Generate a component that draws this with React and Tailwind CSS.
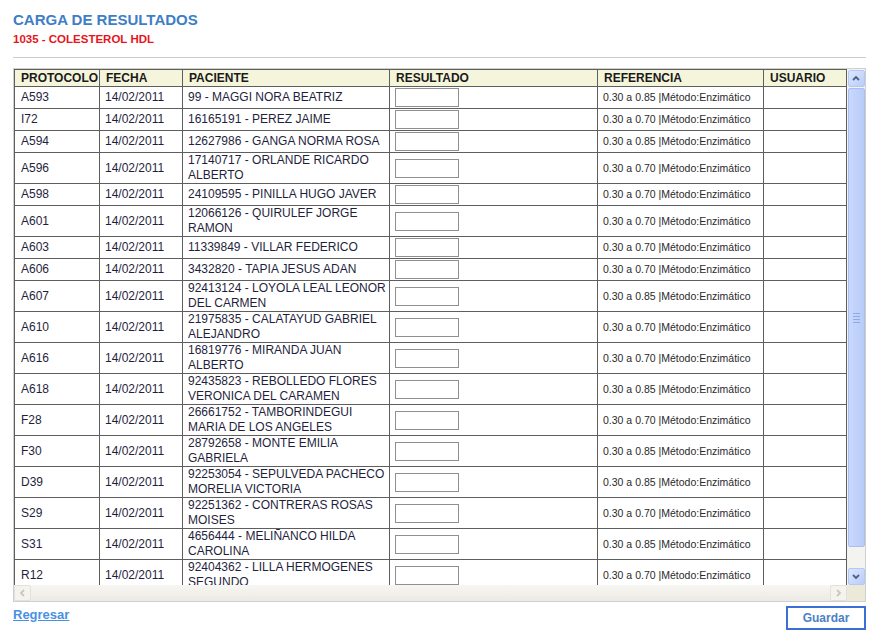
import React from 'react';

const rows = [
    ['A593', '99 - MAGGI NORA BEATRIZ', '0.85'],
    ['I72', '16165191 - PEREZ JAIME', '0.70'],
    ['A594', '12627986 - GANGA NORMA ROSA', '0.85'],
    ['A596', '17140717 - ORLANDE RICARDO ALBERTO', '0.70'],
    ['A598', '24109595 - PINILLA HUGO JAVER', '0.70'],
    ['A601', '12066126 - QUIRULEF JORGE RAMON', '0.70'],
    ['A603', '11339849 - VILLAR FEDERICO', '0.70'],
    ['A606', '3432820 - TAPIA JESUS ADAN', '0.70'],
    ['A607', '92413124 - LOYOLA LEAL LEONOR DEL CARMEN', '0.85'],
    ['A610', '21975835 - CALATAYUD GABRIEL ALEJANDRO', '0.70'],
    ['A616', '16819776 - MIRANDA JUAN ALBERTO', '0.70'],
    ['A618', '92435823 - REBOLLEDO FLORES VERONICA DEL CARAMEN', '0.85'],
    ['F28', '26661752 - TAMBORINDEGUI MARIA DE LOS ANGELES', '0.70'],
    ['F30', '28792658 - MONTE EMILIA GABRIELA', '0.85'],
    ['D39', '92253054 - SEPULVEDA PACHECO MORELIA VICTORIA', '0.85'],
    ['S29', '92251362 - CONTRERAS ROSAS MOISES', '0.70'],
    ['S31', '4656444 - MELIÑANCO HILDA CAROLINA', '0.85'],
    ['R12', '92404362 - LILLA HERMOGENES SEGUNDO', '0.70'],
];

const headers = ['PROTOCOLO', 'FECHA', 'PACIENTE', 'RESULTADO', 'REFERENCIA', 'USUARIO'];

function Chevron({ dir, color }) {
    const pts = {
        up: '2,6 5,3 8,6',
        down: '2,3 5,6 8,3',
        left: '6,2 3,5 6,8',
        right: '3,2 6,5 3,8',
    }[dir];
    return (
        <svg width="10" height="10" viewBox="0 0 10 10">
            <polyline points={pts} fill="none" stroke={color} strokeWidth="1.8" />
        </svg>
    );
}

function VButton({ dir }) {
    return (
        <div className="h-[17px] w-[17px] rounded-[2px] border border-[#b4c8f5] bg-gradient-to-br from-[#dce6fe] to-[#b9cdfa] flex items-center justify-center">
            <Chevron dir={dir} color="#4d6185" />
        </div>
    );
}

function HButton({ dir }) {
    return (
        <div className="h-[16px] w-[17px] rounded-[2px] border border-[#e2e1da] bg-[#f4f3ee] flex items-center justify-center">
            <Chevron dir={dir} color="#c9c8c0" />
        </div>
    );
}

export default function App() {
    return (
        <div className="min-h-screen bg-white font-['Liberation_Sans',Arial,sans-serif] pl-[13px] pt-[10px]">
            <h1 className="text-[15px] leading-[19px] font-bold text-[#3d7ec6]">CARGA DE RESULTADOS</h1>
            <h2 className="text-[11.5px] leading-[15px] font-bold text-[#e8141c] mt-[3px]">1035 - COLESTEROL HDL</h2>
            <div className="w-[853px] h-px bg-[#cccccc] mt-[10px]" />

            <div className="w-[853px] mt-[10px] border border-[#cfcfcf] flex flex-col">
                <div className="flex">
                    <div className="flex-1 h-[516px] overflow-hidden">
                        <table className="table-fixed border-collapse w-[832px] text-[12px] leading-[15px] text-[#1f1f3d]">
                            <colgroup>
                                <col className="w-[85px]" />
                                <col className="w-[83px]" />
                                <col className="w-[207px]" />
                                <col className="w-[208px]" />
                                <col className="w-[166px]" />
                                <col className="w-[83px]" />
                            </colgroup>
                            <thead>
                                <tr className="bg-[#f5f5dc]">
                                    {headers.map((h) => (
                                        <th key={h} className="border border-[#5e5e5e] text-left font-bold text-[#1a1a1a] pl-[6px] leading-[15px] h-[17px]">
                                            {h}
                                        </th>
                                    ))}
                                </tr>
                            </thead>
                            <tbody>
                                {rows.map(([prot, pac, ref]) => (
                                    <tr key={prot}>
                                        <td className="border border-[#5e5e5e] pl-[6px]">{prot}</td>
                                        <td className="border border-[#5e5e5e] pl-[5px]">14/02/2011</td>
                                        <td className="border border-[#5e5e5e] pl-[5px] pr-[1px]">{pac}</td>
                                        <td className="border border-[#5e5e5e] pl-[5px]">
                                            <input type="text" className="block w-[64px] h-[19px] my-px border border-[#8f8f8f] bg-white outline-none" />
                                        </td>
                                        <td className="border border-[#5e5e5e] pl-[5px] text-[10.5px] text-[#2a2a2a]">
                                            0.30 a {ref} |Método:Enzimático
                                        </td>
                                        <td className="border border-[#5e5e5e]"></td>
                                    </tr>
                                ))}
                            </tbody>
                        </table>
                    </div>
                    <div className="w-[18px] h-[516px] bg-[#f3f3ef] flex flex-col items-center pt-px">
                        <VButton dir="up" />
                        <div className="w-[17px] h-[459px] mt-px rounded-[2px] border border-[#a9bef3] bg-gradient-to-r from-[#c9d8fd] to-[#b8ccf9] flex flex-col items-center justify-center gap-[2px]">
                            <div className="w-[7px] h-px bg-[#8fa8e6]" />
                            <div className="w-[7px] h-px bg-[#8fa8e6]" />
                            <div className="w-[7px] h-px bg-[#8fa8e6]" />
                            <div className="w-[7px] h-px bg-[#8fa8e6]" />
                        </div>
                        <div className="flex-1" />
                        <VButton dir="down" />
                    </div>
                </div>
                <div className="flex h-[16px]">
                    <div className="flex-1 flex justify-between bg-gradient-to-b from-[#f7f6f2] to-[#ebeae4]">
                        <HButton dir="left" />
                        <HButton dir="right" />
                    </div>
                    <div className="w-[18px] bg-[#ece9d8]" />
                </div>
            </div>

            <div className="w-[853px] flex justify-between items-start mt-[4px]">
                <a href="#" className="text-[13px] leading-[16px] font-bold underline text-[#4a90e2] mt-[1px]">Regresar</a>
                <button className="w-[80px] h-[24px] border-2 border-[#3a6fd8] bg-white text-[12px] font-bold text-[#4a80c4]">
                    Guardar
                </button>
            </div>
        </div>
    );
}
